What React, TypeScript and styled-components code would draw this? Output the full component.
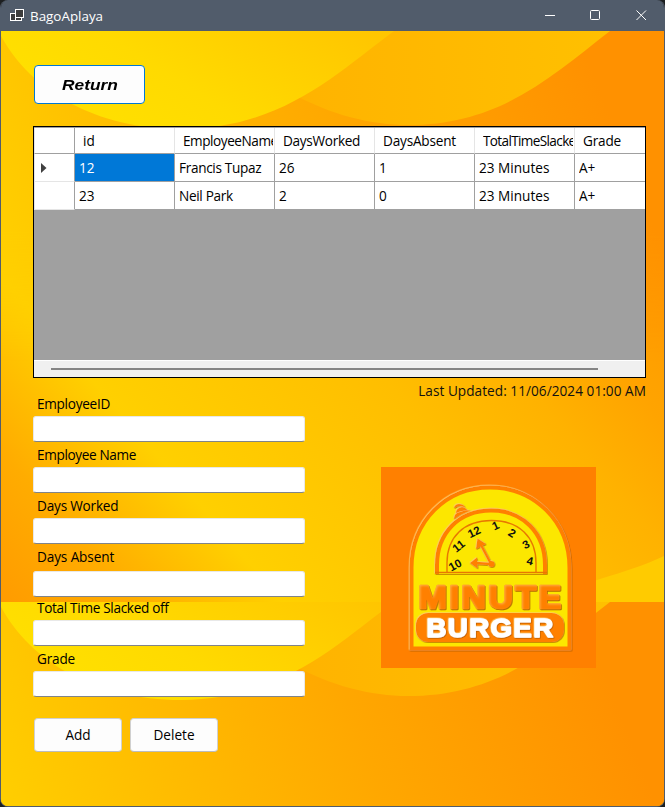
import React from "react";
import styled, { createGlobalStyle, css } from "styled-components";

const uiFont = '"Open Sans", "Noto Sans", sans-serif';

const GlobalStyle = createGlobalStyle`
  * { box-sizing: border-box; }
  html, body { margin: 0; padding: 0; background: #1d1f21; }
  body { width: 665px; height: 807px; overflow: hidden; }
`;

const Window = styled.div`
  position: relative;
  isolation: isolate;
  width: 665px;
  height: 807px;
  display: flex;
  flex-direction: column;
  overflow: hidden;
  border: 1px solid #515c6b;
  border-top: 0;
  border-radius: 8px;
  font: 13.6px/20px ${uiFont};
  color: #111;
`;

const TitleBar = styled.header`
  flex: none;
  height: 31px;
  display: flex;
  align-items: center;
  background: #515c6b;
  color: #fff;
  padding-left: 8px;
`;

const WindowTitle = styled.span`
  flex: 1;
  padding: 1px 0 0 5px;
  font-size: 13.4px;
`;

const Caption = styled.span`
  width: 46px;
  height: 31px;
  display: grid;
  place-items: center;
`;

const Captions = styled.div`
  display: flex;
`;

const Backdrop = styled.div`
  position: absolute;
  inset: 31px 0 0 0;
  z-index: -1;
  overflow: hidden;
  background: #ffb800;

  svg { display: block; }
`;

const Body = styled.main`
  flex: 1;
  display: flex;
  flex-direction: column;
  padding: 34px 18px 0 32px;
`;

const Tracked = styled.span<{ $tracking?: number }>`
  display: block;
  overflow: hidden;
  letter-spacing: ${(p) => p.$tracking ?? 0}px;
`;

const Button = styled.button<{ $primary?: boolean }>`
  width: 88px;
  height: 34px;
  padding: 0;
  border: 1px solid #d0d0d0;
  border-bottom-color: #bcbcbc;
  border-radius: 4px;
  background: #fdfdfd;
  color: #000;
  font: 13.6px/20px ${uiFont};
  ${(p) =>
    p.$primary &&
    css`
      flex: none;
      width: 111px;
      height: 39px;
      margin-left: 1px;
      border-color: #0078d4;
      font: italic bold 15.5px/20px "Liberation Sans", Arial, sans-serif;

      span {
        display: inline-block;
        transform: scaleX(1.12);
      }
    `}
`;

const DataGrid = styled.section`
  flex: none;
  width: 613px;
  height: 252px;
  margin-top: 22px;
  display: flex;
  flex-direction: column;
  border: 1px solid #000;
  background: #a0a0a0;
`;

const GridRow = styled.div<{ $header?: boolean }>`
  display: grid;
  grid-template-columns: 41px repeat(5, 100px) 70px;
  height: ${(p) => (p.$header ? 27 : 28)}px;
  border-top: ${(p) => (p.$header ? "1px solid #a0a0a0" : "0")};
  overflow: hidden;
`;

const Cell = styled.div<{ $header?: boolean; $selected?: boolean }>`
  height: ${(p) => (p.$header ? 26 : 28)}px;
  padding: ${(p) => (p.$header ? "3px 1px 0 8px" : "4px 0 0 4px")};
  border-right: 1px solid ${(p) => (p.$header ? "#e5e5e5" : "#a0a0a0")};
  border-bottom: 1px solid #a0a0a0;
  background: ${(p) => (p.$selected ? "#0078d7" : "#fff")};
  color: ${(p) => (p.$selected ? "#fff" : "#000")};
  white-space: nowrap;
  overflow: hidden;
  &:last-child { border-right: 0; }
`;

const RowHeader = styled.div<{ $header?: boolean }>`
  display: flex;
  align-items: center;
  padding-left: 6px;
  background: #fff;
  border-left: 1px solid #e5e5e5;
  border-right: 1px solid #a0a0a0;
  border-bottom: 1px solid ${(p) => (p.$header ? "#a0a0a0" : "#e5e5e5")};
`;

const ScrollTrack = styled.div`
  margin-top: auto;
  height: 17px;
  border-top: 1px solid #fff;
  background: #f0f0f0;
  padding: 7px 47px 0 17px;
`;

const ScrollThumb = styled.div`
  height: 2px;
  background: #858585;
`;

const Lower = styled.div`
  display: flex;
  justify-content: space-between;
`;

const Form = styled.form`
  width: 272px;
  padding-top: 16px;
`;

const Field = styled.label<{ $shift?: number }>`
  display: flex;
  flex-direction: column;
  height: 51px;
  gap: ${(p) => 2 + (p.$shift ?? 0)}px;
  line-height: 20px;
  color: #000;

  span { padding-left: 4px; }
`;

const Input = styled.input`
  width: 272px;
  height: 26px;
  flex: none;
  padding: 2px 6px;
  border: 1px solid #e8e8e8;
  border-bottom-color: #808489;
  border-radius: 3px;
  outline: none;
  background: #fff;
  font: inherit;
`;

const Actions = styled.div`
  display: flex;
  gap: 8px;
  padding: 18px 0 0 1px;
`;

const Side = styled.aside`
  display: flex;
  flex-direction: column;
  align-items: flex-end;
`;

const Updated = styled.div`
  margin-top: 3px;
  white-space: nowrap;
  letter-spacing: 0.05px;
`;

const LogoFrame = styled.div`
  width: 215px;
  height: 201px;
  margin: 66px 50px 0 0;
  svg { display: block; }
`;

const AppIcon = () => (
  <svg width="16" height="16" viewBox="0 0 16 16" fill="#3c3c3c" stroke="#fff">
    <rect x="1.5" y="5.5" width="6" height="7" />
    <rect x="6.5" y="9.5" width="6" height="3" />
    <rect x="6.5" y="1.5" width="8" height="8" />
  </svg>
);

const Waves = () => (
  <svg width="663" height="776" viewBox="0 0 663 776">
    <defs>
      <linearGradient id="base" gradientUnits="userSpaceOnUse" x1="0" y1="571" x2="600" y2="54">
        <stop offset="0" stopColor="#ff9b00" />
        <stop offset="0.125" stopColor="#ffac00" />
        <stop offset="0.27" stopColor="#ffd000" />
        <stop offset="0.55" stopColor="#ffbe00" />
        <stop offset="0.68" stopColor="#ffb200" />
        <stop offset="0.78" stopColor="#ffa400" />
        <stop offset="1" stopColor="#ff9200" />
      </linearGradient>
      <linearGradient id="field" gradientUnits="userSpaceOnUse" x1="0" y1="240" x2="580" y2="10">
        <stop offset="0" stopColor="#ffd000" />
        <stop offset="0.3" stopColor="#ffbb00" />
        <stop offset="0.6" stopColor="#ffa700" />
        <stop offset="1" stopColor="#ff9100" />
      </linearGradient>
      <linearGradient id="shade" x1="0" y1="0" x2="0" y2="1">
        <stop offset="0.35" stopColor="#fff" />
        <stop offset="0.58" stopColor="#000" />
      </linearGradient>
      <mask id="fade">
        <rect width="663" height="571" fill="url(#shade)" />
      </mask>
      <linearGradient id="waveLeft" x1="0" y1="0.4" x2="1" y2="0">
        <stop offset="0" stopColor="#ffe000" />
        <stop offset="0.35" stopColor="#ffda00" />
        <stop offset="1" stopColor="#ffc400" />
      </linearGradient>
      <linearGradient id="waveRight" x1="0" y1="0" x2="1" y2="0">
        <stop offset="0" stopColor="#ffb300" />
        <stop offset="1" stopColor="#ffc000" />
      </linearGradient>
      <g id="tile">
        <rect width="663" height="571" fill="url(#base)" />
        <rect width="663" height="571" fill="url(#field)" mask="url(#fade)" />
        <path d="M663 525 C625 543 575 553 530 571 H663Z" fill="#ffcb00" />
        <path d="M290 62 C330 84 370 94 407 94 C500 94 552 44 609 0 H380Z" fill="url(#waveRight)" />
        <path d="M0 5 C30 60 95 98 180 98 C280 98 335 43 393 0 H0Z" fill="url(#waveLeft)" />
      </g>
    </defs>
    <use href="#tile" />
    <use href="#tile" y="571" />
  </svg>
);

const hours: [string, number, number, number][] = [
  ["10", 74, 98, -28],
  ["11", 77.5, 79, -38],
  ["12", 93, 65, -25],
  ["1", 114.5, 58.5, -25],
  ["2", 131, 66, 32],
  ["3", 145, 77.5, -28],
  ["4", 149, 94, 12],
];

const Logo = () => (
  <svg width="215" height="201" viewBox="0 0 215 201" fontFamily='"Liberation Sans", Arial, sans-serif' fontWeight="bold">
    <defs>
      <filter id="bevel" x="-10%" y="-10%" width="120%" height="120%">
        <feDropShadow dx="-0.6" dy="-0.6" stdDeviation="0.4" floodColor="#ffd36e" />
        <feDropShadow dx="0.7" dy="0.8" stdDeviation="0.6" floodColor="#a85600" floodOpacity="0.75" />
      </filter>
      <filter id="emboss" x="-10%" y="-15%" width="120%" height="130%" colorInterpolationFilters="sRGB">
        <feGaussianBlur in="SourceAlpha" stdDeviation="0.8" result="soft" />
        <feOffset in="soft" dx="1.2" dy="1.2" result="inset" />
        <feComposite in="SourceAlpha" in2="inset" operator="out" result="rim" />
        <feFlood floodColor="#ffc766" floodOpacity="0.7" />
        <feComposite in2="rim" operator="in" result="light" />
        <feMerge result="lit">
          <feMergeNode in="SourceGraphic" />
          <feMergeNode in="light" />
        </feMerge>
        <feDropShadow in="lit" dx="0.8" dy="1" stdDeviation="0.6" floodColor="#a85600" floodOpacity="0.85" />
      </filter>
    </defs>
    <rect width="215" height="201" fill="#ff8000" />
    <path d="M30.5 181.5 V101 C30.5 54 65 20.5 109 20.5 S188.5 54 188.5 101 V181.5Z" fill="#fce700" stroke="#ff8000" strokeWidth="4" filter="url(#bevel)" />
    <g filter="url(#bevel)" fill="#ff8000">
      <path d="M73 41 Q74 37 78 37 Q82 37 84 40 Q78 38 73 41Z" />
      <path d="M75 46 Q75 41 81 40 Q86 41 86 43.5 Q80 43 75 46Z" />
      <path d="M73 52 Q73 46 79 45 Q86 42 90 44 Q82 46 73 52Z" />
    </g>
    <path d="M56 105 V98 C56 66 78 43.5 110 43.5 S164 66 164 98 V105Z" fill="#fce700" stroke="#ff8000" strokeWidth="4" filter="url(#bevel)" />
    <path d="M58 105 H162" stroke="#fce700" strokeWidth="4" />
    <path d="M54 105.5 H166" stroke="#e87800" strokeWidth="1.4" />
    <path d="M66 105 V96 C66 70 83 53.5 110.5 53.5 S155 70 155 96 V105" fill="none" stroke="#e87800" strokeWidth="1.4" />
    <g fill="#111" fontSize="11.5" textAnchor="middle">
      {hours.map(([label, x, y, angle]) => (
        <text key={label} transform={`translate(${x} ${y}) rotate(${angle})`} y="4">{label}</text>
      ))}
    </g>
    <g filter="url(#bevel)" fill="#ff8000">
      <path d="M110 97 L99.5 77" stroke="#ff8000" strokeWidth="2.5" />
      <path d="M110 97 L95 96" stroke="#ff8000" strokeWidth="2.5" />
      <path d="M96.5 71.5 L105 77 L95 82Z" />
      <path d="M89 96 L96 90.5 L96.5 101.5Z" />
      <circle cx="110.5" cy="97" r="3" />
    </g>
    <text x="37.5" y="140.500" fontSize="32" letterSpacing="2.5" textLength="145" lengthAdjust="spacingAndGlyphs" fill="#ff8000" stroke="#ff8000" strokeWidth="2.6" strokeLinejoin="round" filter="url(#emboss)">MINUTE</text>
    <rect x="35" y="146" width="148" height="29" rx="12" fill="#ff8000" filter="url(#bevel)" />
    <text x="45.5" y="170" fontSize="26" letterSpacing="1.2" textLength="128" lengthAdjust="spacingAndGlyphs" fill="#fff" stroke="#fff" strokeWidth="1.4" strokeLinejoin="round" filter="url(#bevel)">BURGER</text>
  </svg>
);

const columns = [
  { name: "id" },
  { name: "EmployeeName", tracking: -0.45 },
  { name: "DaysWorked", tracking: -0.3 },
  { name: "DaysAbsent", tracking: -0.2 },
  { name: "TotalTimeSlackedOff", tracking: -0.65 },
  { name: "Grade", tracking: -0.2 },
];
const rows = [
  ["12", "Francis Tupaz", "26", "1", "23 Minutes", "A+"],
  ["23", "Neil Park", "2", "0", "23 Minutes", "A+"],
];
const nameTracking = -0.32;
const fields = [
  { label: "EmployeeID", tracking: -0.28 },
  { label: "Employee Name", tracking: -0.36 },
  { label: "Days Worked", tracking: -0.2 },
  { label: "Days Absent", shift: 2, tracking: -0.12 },
  { label: "Total Time Slacked off", tracking: -0.32 },
  { label: "Grade", tracking: -0.2 },
];

export default function App() {
  return (
    <>
      <GlobalStyle />
      <Window>
        <Backdrop><Waves /></Backdrop>
        <TitleBar>
          <AppIcon />
          <WindowTitle>BagoAplaya</WindowTitle>
          <Captions>
            <Caption><svg width="11" height="11" stroke="#fff"><path d="M1 5.5H11" /></svg></Caption>
            <Caption><svg width="11" height="11" fill="none" stroke="#fff"><rect x="0.5" y="0.5" width="9" height="9" rx="1" /></svg></Caption>
            <Caption><svg width="11" height="11" stroke="#fff"><path d="M0.5 0.5L10 10M10 0.5L0.5 10" /></svg></Caption>
          </Captions>
        </TitleBar>
        <Body>
          <Button $primary><span>Return</span></Button>
          <DataGrid>
            <GridRow $header>
              <RowHeader $header />
              {columns.map((col) => (
                <Cell key={col.name} $header>
                  <Tracked $tracking={col.tracking}>{col.name}</Tracked>
                </Cell>
              ))}
            </GridRow>
            {rows.map((row, r) => (
              <GridRow key={row[0]}>
                <RowHeader>
                  {r === 0 && <svg width="6" height="10"><path d="M0 0L5.5 5L0 10Z" fill="#404040" /></svg>}
                </RowHeader>
                {row.map((value, c) => (
                  <Cell key={c} $selected={r === 0 && c === 0}>
                    <Tracked $tracking={c === 1 ? nameTracking : 0}>{value}</Tracked>
                  </Cell>
                ))}
              </GridRow>
            ))}
            <ScrollTrack><ScrollThumb /></ScrollTrack>
          </DataGrid>
          <Lower>
            <Form>
              {fields.map((f) => (
                <Field key={f.label} $shift={f.shift}>
                  <Tracked $tracking={f.tracking}>{f.label}</Tracked>
                  <Input />
                </Field>
              ))}
              <Actions>
                <Button type="button">Add</Button>
                <Button type="button">Delete</Button>
              </Actions>
            </Form>
            <Side>
              <Updated>Last Updated: 11/06/2024 01:00 AM</Updated>
              <LogoFrame><Logo /></LogoFrame>
            </Side>
          </Lower>
        </Body>
      </Window>
    </>
  );
}
